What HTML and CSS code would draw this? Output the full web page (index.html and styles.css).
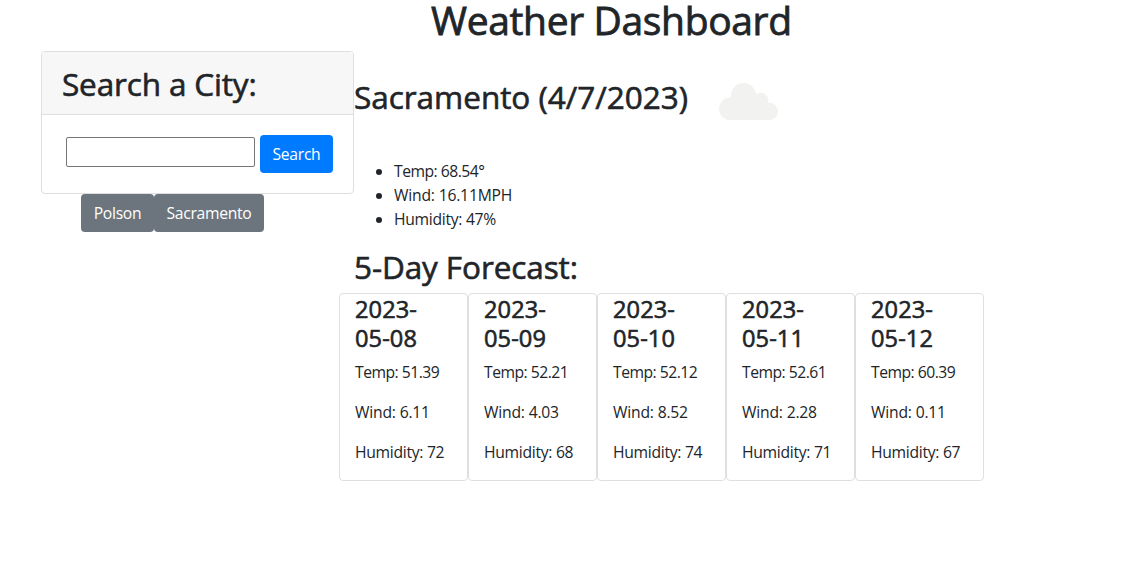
FILE: index.html
```html
<!DOCTYPE html>
<html lang="en">
<head>
<meta charset="utf-8">
<title>Weather Dashboard</title>
<link rel="stylesheet" href="styles.css">
</head>
<body>
<h1 class="title">Weather Dashboard</h1>
<div class="layout">
  <aside class="sidebar">
    <section class="search-card">
      <h2 class="search-head">Search a City:</h2>
      <form class="search-form">
        <input class="search-input" type="text" aria-label="City">
        <button class="btn btn-primary" type="button">Search</button>
      </form>
    </section>
    <div class="history">
      <button class="btn btn-polson" type="button">Polson</button>
      <button class="btn btn-sacramento" type="button">Sacramento</button>
    </div>
  </aside>
  <main class="main">
    <div class="current">
      <h2 class="city">Sacramento (4/7/2023)</h2>
      <svg class="cloud" viewBox="0 0 59 37" aria-hidden="true">
        <g fill="#f2f2f0">
          <circle cx="11.2" cy="25.8" r="11.2"/>
          <circle cx="24.6" cy="12.5" r="12.5"/>
          <circle cx="41.9" cy="17.3" r="7.5"/>
          <circle cx="50.3" cy="28.3" r="8.7"/>
          <path d="M11.2 37V20L14 18L36 14L44 22L50.3 28V37Z"/>
        </g>
      </svg>
    </div>
    <ul class="stats">
      <li class="temp">Temp: 68.54°</li>
      <li class="wind">Wind: 16.11MPH</li>
      <li>Humidity: 47%</li>
    </ul>
    <h2 class="forecast-title">5-Day Forecast:</h2>
    <div class="forecast">
      <article class="day"><h4>2023-05-08</h4><p class="temp">Temp: 51.39</p><p class="wind">Wind: 6.11</p><p>Humidity: 72</p></article>
      <article class="day"><h4>2023-05-09</h4><p class="temp">Temp: 52.21</p><p class="wind">Wind: 4.03</p><p>Humidity: 68</p></article>
      <article class="day"><h4>2023-05-10</h4><p class="temp">Temp: 52.12</p><p class="wind">Wind: 8.52</p><p>Humidity: 74</p></article>
      <article class="day"><h4>2023-05-11</h4><p class="temp">Temp: 52.61</p><p class="wind">Wind: 2.28</p><p>Humidity: 71</p></article>
      <article class="day"><h4>2023-05-12</h4><p class="temp">Temp: 60.39</p><p class="wind">Wind: 0.11</p><p>Humidity: 67</p></article>
    </div>
  </main>
</div>
</body>
</html>
```
FILE: styles.css
```css
* { box-sizing: border-box; }
body {
  margin: 0;
  background: #fff;
  color: #212529;
  font: 400 15.7px/24px "Segoe UI", "Open Sans", "Noto Sans", sans-serif;
  letter-spacing: -0.3px;
}
h1, h2, h4, p, ul { margin: 0; }
h1, h2, h4 { font-weight: 500; -webkit-text-stroke: 0.6px #212529; }
.title {
  height: 51px;
  padding-left: 431px;
  font-size: 39px;
  line-height: 40px;
  letter-spacing: -0.35px;
  white-space: nowrap;
  -webkit-text-stroke-width: 0.8px;
}
.layout { display: flex; }
.sidebar { width: 313px; margin-left: 41px; }
.search-card {
  height: 143px;
  border: 1px solid #dfdfdf;
  border-radius: 4px;
}
.search-head {
  height: 63px;
  padding: 11px 20px;
  border-bottom: 1px solid #dfdfdf;
  border-radius: 3px 3px 0 0;
  background: #f7f7f7;
  font-size: 31.5px;
  line-height: 42px;
  letter-spacing: -0.15px;
}
.search-form {
  display: flex;
  gap: 5px;
  padding: 20px 20px 0 24px;
}
.search-input {
  width: 189px;
  height: 30px;
  margin-top: 2px;
  border: 1px solid #767676;
  border-radius: 2px;
  font: inherit;
}
.btn {
  height: 38px;
  padding: 0;
  border: 0;
  border-radius: 4px;
  background: #6c757d;
  color: #fff;
  font: inherit;
  letter-spacing: -0.3px;
}
.btn-primary { width: 73px; background: #007bff; }
.history { display: flex; padding-left: 40px; }
.btn-polson { width: 73px; }
.btn-sacramento { width: 110px; }
.main { width: 645px; }
.current {
  display: flex;
  height: 108px;
  gap: 30px;
}
.city {
  width: 335px;
  padding-top: 25px;
  font-size: 31.5px;
  line-height: 42px;
  letter-spacing: -0.03px;
  white-space: nowrap;
}
.cloud { width: 59px; height: 37px; margin-top: 32px; }
.stats { padding-left: 40px; }
.temp { letter-spacing: -0.5px; }
.wind { letter-spacing: -0.2px; }
.forecast-title {
  margin-top: 17px;
  height: 45px;
  font-size: 31.5px;
  line-height: 38px;
  letter-spacing: -0.1px;
}
.forecast { display: flex; margin-left: -15px; }
.day {
  width: 129px;
  height: 188px;
  padding: 1px 15px 0;
  border: 1px solid #dfdfdf;
  border-radius: 4px;
}
.day h4 {
  width: 80px;
  margin-bottom: 7px;
  font-size: 23.6px;
  line-height: 29px;
  letter-spacing: 0.1px;
}
.day p { margin-bottom: 16px; white-space: nowrap; }
```
